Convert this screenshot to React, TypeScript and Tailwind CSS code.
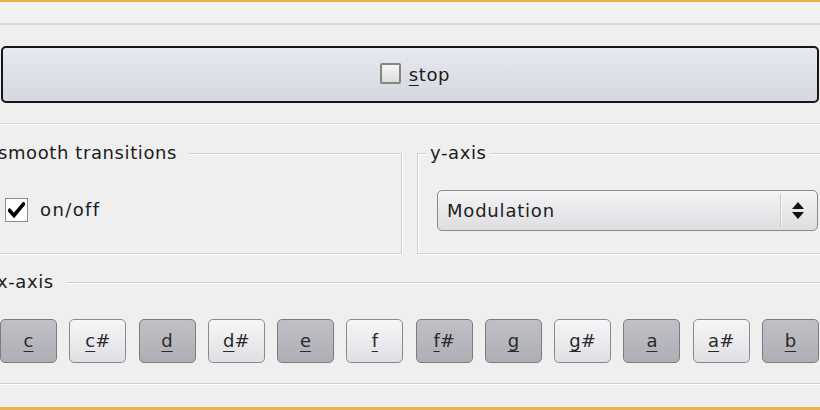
import React from "react";

type GroupProps = {
  title: string;
  className: string;
  titleClass: string;
  children: React.ReactNode;
};

function Group({ title, className, titleClass, children }: GroupProps) {
  return (
    <div
      className={`relative border border-[#cfcfcf] shadow-[inset_1px_1px_0_#ffffff,1px_1px_0_#ffffff] ${className}`}
    >
      <span
        className={`absolute top-[-12px] leading-[22px] bg-[#efefef] text-[#1c1c1c] ${titleClass}`}
      >
        {title}
      </span>
      {children}
    </div>
  );
}

const notes: [string, string, boolean][] = [
  ["c", "", true],
  ["c", "#", false],
  ["d", "", true],
  ["d", "#", false],
  ["e", "", true],
  ["f", "", false],
  ["f", "#", true],
  ["g", "", true],
  ["g", "#", false],
  ["a", "", true],
  ["a", "#", false],
  ["b", "", true],
];

export default function App() {
  return (
    <div className="w-[820px] h-[410px] overflow-hidden bg-[#efefef] flex flex-col font-['DejaVu_Sans',Verdana,sans-serif] text-[18px] tracking-[0.6px] text-[#1c1c1c]">
      {/* top window edge */}
      <div className="h-[2px] bg-[#e9b24a] shrink-0" />
      <div className="h-[21px] shrink-0 bg-[#f3f2f0] flex flex-col">
        <div className="h-[1px] bg-[#eef2f4] mt-[2px]" />
        <div className="h-[1px] bg-[#f6f1ee] mt-[3px]" />
        <div className="h-[1px] bg-[#eef0ee] mt-[4px]" />
      </div>
      <div className="h-[2px] bg-[#dad6df] shrink-0" />

      {/* stop button */}
      <div className="mt-[21px] mx-[1px] h-[57px] shrink-0 rounded-[5px] border-2 border-[#161616] bg-gradient-to-b from-[#e7e9f1] to-[#d6d8e0] flex items-center justify-center gap-[8px] pl-[10px]">
        <span className="w-[21px] h-[21px] border-2 border-[#858585] rounded-[2px] bg-gradient-to-b from-[#f6f6f6] to-[#dcdcdc] mt-[-3px]" />
        <span className="leading-[22px]">
          <span className="underline underline-offset-[4px]">s</span>top
        </span>
      </div>

      {/* separator */}
      <div className="mt-[20px] h-[1px] bg-[#d5d5d5] shrink-0" />
      <div className="h-[1px] bg-[#ffffff] shrink-0" />

      {/* group row */}
      <div className="mt-[28px] flex shrink-0">
        <Group
          title="smooth transitions"
          className="ml-[-12px] w-[414px] h-[101px] pt-[44px] pl-[16px]"
          titleClass="left-[6px] pl-[3px] pr-[12px]"
        >
          <div className="flex items-center gap-[12px]">
            <span className="w-[23px] h-[24px] border border-[#8c8c8c] bg-white flex items-center justify-center">
              <svg width="17" height="16" viewBox="0 0 17 16">
                <path
                  d="M1.5 8.5 L6 13.5 L15.5 2"
                  fill="none"
                  stroke="#000"
                  strokeWidth="3.6"
                  strokeLinecap="square"
                  strokeLinejoin="miter"
                />
              </svg>
            </span>
            <span className="leading-[22px] tracking-[1.4px]">on/off</span>
          </div>
        </Group>
        <Group
          title="y-axis"
          className="ml-[15px] mr-[-12px] flex-1 h-[101px] pt-[36px] pl-[19px]"
          titleClass="left-[9px] px-[3px]"
        >
          <div className="w-[381px] h-[41px] rounded-[5px] border border-[#8a8a8a] bg-gradient-to-b from-[#f4f4f6] to-[#dedee2] flex items-center">
            <span className="flex-1 pl-[9px] leading-[22px] tracking-[0.8px] text-[#1e1e1e]">
              Modulation
            </span>
            <span className="w-[1px] h-[33px] bg-[#c9c9cc] shadow-[1px_0_0_#f8f8f8]" />
            <span className="w-[36px] flex flex-col items-center justify-center gap-[3px] pr-[2px]">
              <svg width="12" height="7" viewBox="0 0 12 7">
                <path d="M6 0 L12 7 L0 7 Z" fill="#111" />
              </svg>
              <svg width="12" height="7" viewBox="0 0 12 7">
                <path d="M0 0 L12 0 L6 7 Z" fill="#111" />
              </svg>
            </span>
          </div>
        </Group>
      </div>

      {/* x-axis */}
      <Group
        title="x-axis"
        className="mt-[28px] ml-[-12px] mr-[-13px] h-[102px] shrink-0 pt-[36px] pl-[11px] pr-[13px]"
        titleClass="left-[5px] pl-[3px] pr-[12px]"
      >
        <div className="flex justify-between">
          {notes.map(([n, s, dark], i) => (
            <span
              key={i}
              className={
                dark
                  ? "w-[57px] h-[44px] rounded-[5px] border border-[#7c7c80] bg-gradient-to-b from-[#bfc1c6] to-[#adafb5] flex items-center justify-center text-[#2a2a2a]"
                  : "w-[57px] h-[44px] rounded-[5px] border border-[#8a8a8e] bg-gradient-to-b from-[#f6f6f8] to-[#e0e0e4] flex items-center justify-center text-[#2a2a2a]"
              }
            >
              <span className="leading-[22px] tracking-[0px]">
                <span className="underline underline-offset-[4px]">{n}</span>
                {s}
              </span>
            </span>
          ))}
        </div>
      </Group>

      <div className="mt-[23px] h-[3px] bg-[#e9b24a] shrink-0" />
    </div>
  );
}
